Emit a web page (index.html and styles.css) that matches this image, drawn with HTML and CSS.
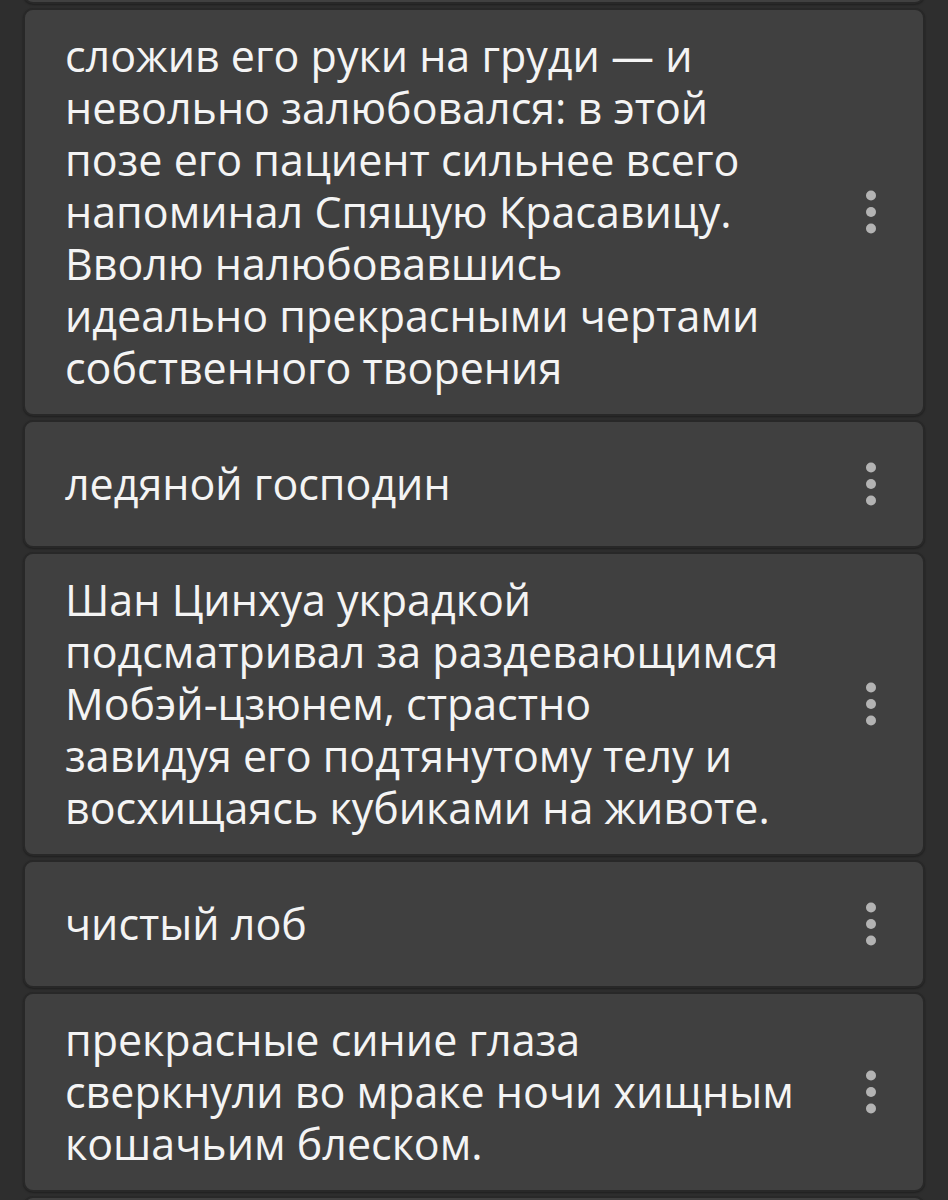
FILE: index.html
```html
<!DOCTYPE html>
<html lang="ru">

<head>
    <meta charset="UTF-8">
    <meta name="viewport" content="width=device-width, initial-scale=1.0">
    <title>Заметки</title>
    <link rel="stylesheet" href="styles.css">
</head>

<body>

    <div class="list">
        <div class="card card-stub"></div>

        <div class="card">
            <p class="card-text">сложив его руки на груди — и<br>невольно залюбовался: в этой<br>позе его пациент сильнее всего<br>напоминал Спящую Красавицу.<br>Вволю налюбовавшись<br>идеально прекрасными чертами<br>собственного творения</p>
            <button class="more" aria-label="Меню">
                <svg viewBox="0 0 12 44" width="12" height="44"><circle cx="6" cy="5.5" r="5"/><circle cx="6" cy="22" r="5"/><circle cx="6" cy="38.5" r="5"/></svg>
            </button>
        </div>

        <div class="card">
            <p class="card-text">ледяной господин</p>
            <button class="more" aria-label="Меню">
                <svg viewBox="0 0 12 44" width="12" height="44"><circle cx="6" cy="5.5" r="5"/><circle cx="6" cy="22" r="5"/><circle cx="6" cy="38.5" r="5"/></svg>
            </button>
        </div>

        <div class="card">
            <p class="card-text">Шан Цинхуа украдкой<br>подсматривал за раздевающимся<br>Мобэй-цзюнем, страстно<br>завидуя его подтянутому телу и<br>восхищаясь кубиками на животе.</p>
            <button class="more" aria-label="Меню">
                <svg viewBox="0 0 12 44" width="12" height="44"><circle cx="6" cy="5.5" r="5"/><circle cx="6" cy="22" r="5"/><circle cx="6" cy="38.5" r="5"/></svg>
            </button>
        </div>

        <div class="card">
            <p class="card-text">чистый лоб</p>
            <button class="more" aria-label="Меню">
                <svg viewBox="0 0 12 44" width="12" height="44"><circle cx="6" cy="5.5" r="5"/><circle cx="6" cy="22" r="5"/><circle cx="6" cy="38.5" r="5"/></svg>
            </button>
        </div>

        <div class="card">
            <p class="card-text">прекрасные синие глаза<br>сверкнули во мраке ночи хищным<br>кошачьим блеском.</p>
            <button class="more" aria-label="Меню">
                <svg viewBox="0 0 12 44" width="12" height="44"><circle cx="6" cy="5.5" r="5"/><circle cx="6" cy="22" r="5"/><circle cx="6" cy="38.5" r="5"/></svg>
            </button>
        </div>

        <div class="card card-stub"></div>
    </div>

</body>

</html>
```

FILE: styles.css
```css
html,
body {
    margin: 0;
    height: 1200px;
    overflow: hidden;
    background-color: #2e2e2e;
    /* Dark app background */
}

body {
    font-family: "Open Sans", "Noto Sans", sans-serif;
}

.list {
    display: flex;
    flex-direction: column;
    gap: 4px;
    padding: 0 23px 0 23px;
    margin-top: -124px;
    /* List is scrolled, the previous card only peeks in */
}

.card {
    display: flex;
    align-items: center;
    box-sizing: border-box;
    min-height: 128px;
    padding: 20px 36px 20px 40px;
    background-color: #404040;
    border: 2px solid #282828;
    border-radius: 10px;
    box-shadow: 0 1px 2px rgba(0, 0, 0, 0.35);
}

.card-stub {
    height: 128px;
}

.card-text {
    flex: 1;
    margin: 0;
    font-size: 43px;
    line-height: 52px;
    color: #f4f4f4;
}

.more {
    display: flex;
    justify-content: center;
    width: 32px;
    margin-left: auto;
    padding: 0;
    background: none;
    border: none;
    cursor: pointer;
}

.more svg {
    fill: #b3b3b3;
}
```
